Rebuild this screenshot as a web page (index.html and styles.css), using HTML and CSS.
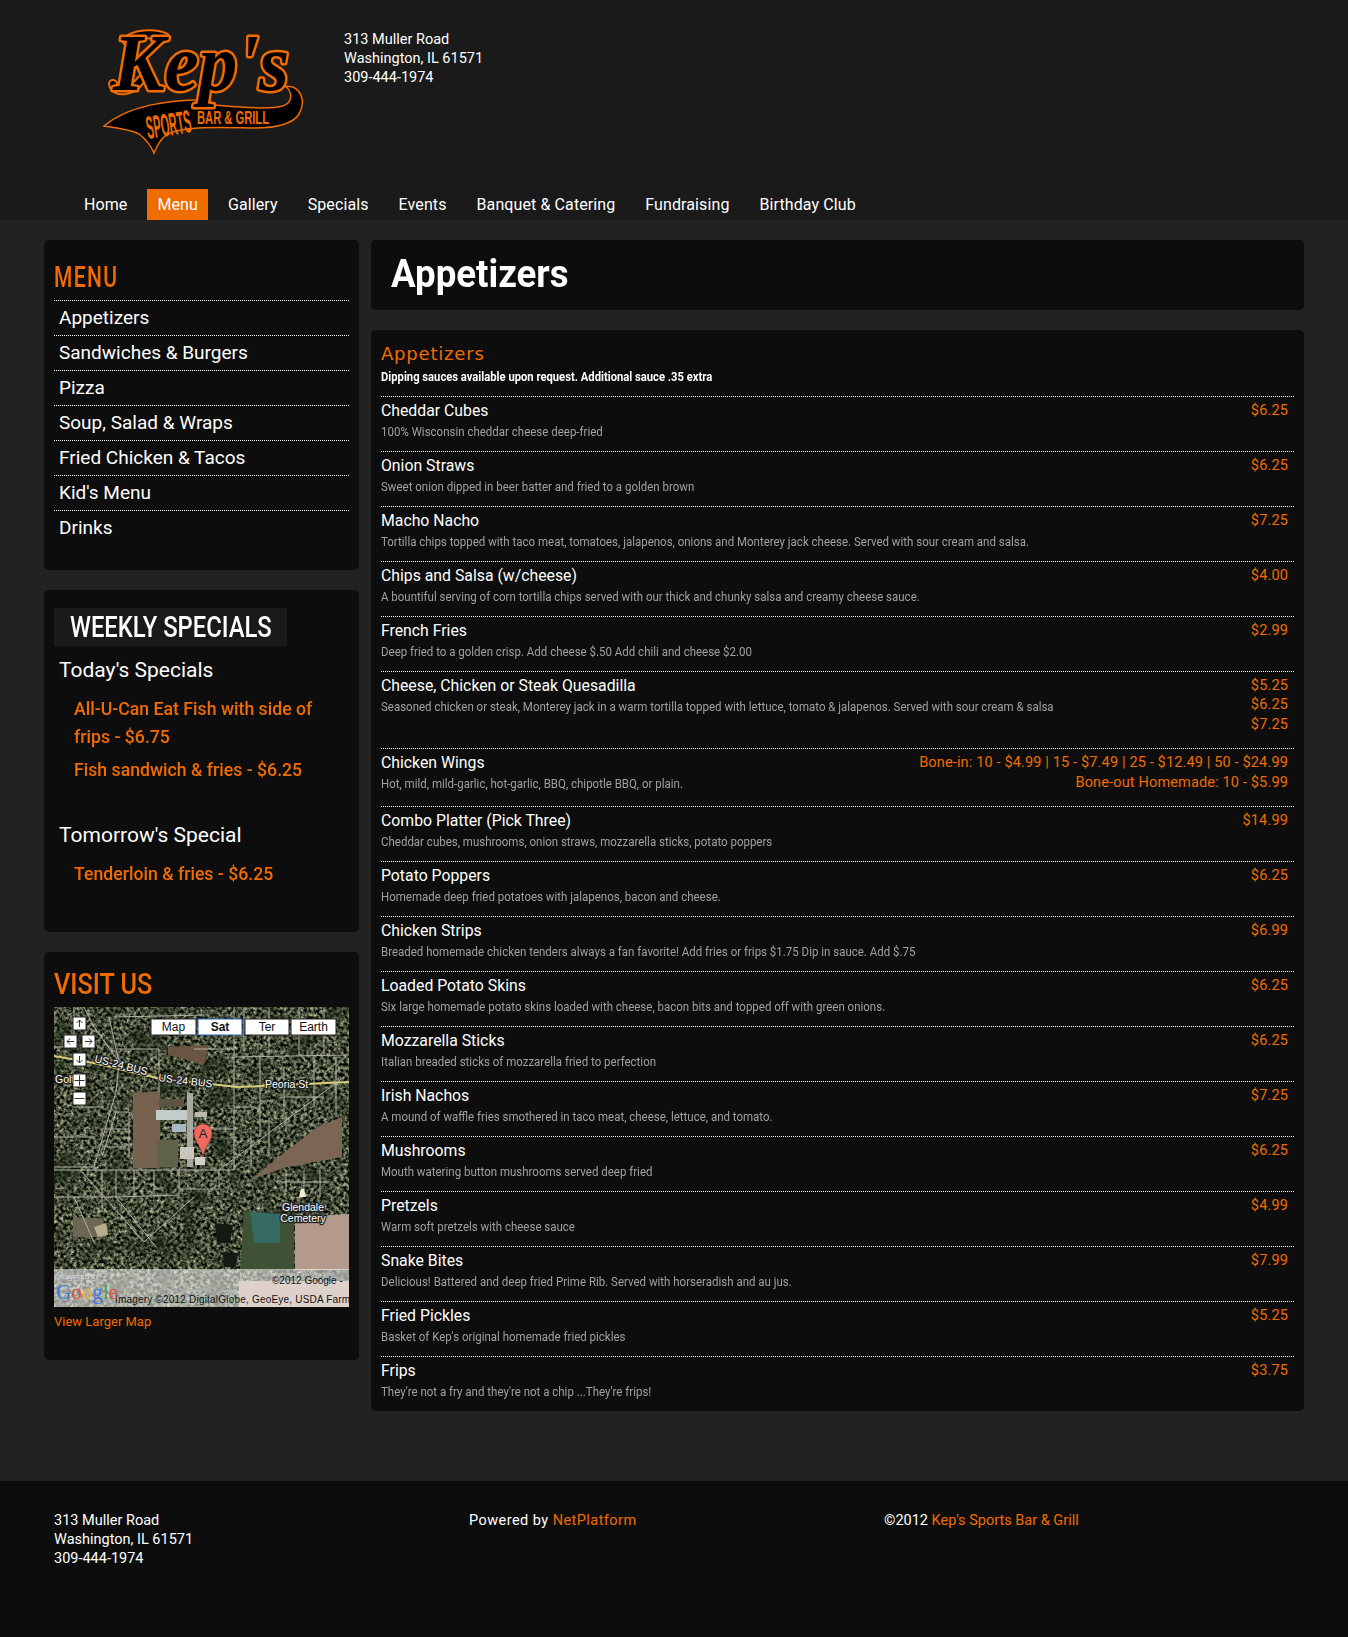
FILE: index.html
```html
<!DOCTYPE html>
<html lang="en">
<head>
    <meta charset="UTF-8">
    <meta name="viewport" content="width=device-width, initial-scale=1.0">
    <title>Kep's Sports Bar &amp; Grill - Menu</title>
    <link rel="stylesheet" href="styles.css">
</head>
<body>

<div class="header">
    <div class="header_top">
        <svg class="logo" width="204" height="128" viewBox="0 0 204 128">
            <!-- swoosh under the name -->
            <path class="swoosh" d="M1 96 C25 76 65 69 106 70 L110 75 C135 77 165 80 180 76 C190 72 190 62 182 56 L190 57 C200 62 202 74 196 84 C190 94 175 98 150 98 C110 97 75 96 62 106 C56 111 53 118 51 123 C48 116 44 110 36 104 C26 99 12 98 1 96 Z"/>
            <path class="flourish_out" d="M24 11 C30 4 50 2 62 7 M10 54 C12 63 28 63 38 50"/>
            <path class="flourish_in" d="M24 11 C30 4 50 2 62 7 M10 54 C12 63 28 63 38 50"/>
            <text class="logo_name" x="10" y="60" textLength="176" lengthAdjust="spacingAndGlyphs">Kep's</text>
            <text class="logo_sports" transform="translate(45 109) rotate(-9)" textLength="45" lengthAdjust="spacingAndGlyphs">SPORTS</text>
            <text class="logo_bar" x="94" y="94" textLength="72" lengthAdjust="spacingAndGlyphs">BAR &amp; GRILL</text>
        </svg>
        <div class="address">
            313 Muller Road<br>
            Washington, IL 61571<br>
            309-444-1974
        </div>
    </div>
    <div class="nav">
        <a href="#">Home</a>
        <a href="#" class="active">Menu</a>
        <a href="#">Gallery</a>
        <a href="#">Specials</a>
        <a href="#">Events</a>
        <a href="#">Banquet &amp; Catering</a>
        <a href="#">Fundraising</a>
        <a href="#">Birthday Club</a>
    </div>
</div>

<div class="main_div">
    <div class="sidebar">
        <div class="panel menu_panel">
            <h2 class="side_title menu_title"><span>MENU</span></h2>
            <ul class="side_menu">
                <li>Appetizers</li>
                <li>Sandwiches &amp; Burgers</li>
                <li>Pizza</li>
                <li>Soup, Salad &amp; Wraps</li>
                <li>Fried Chicken &amp; Tacos</li>
                <li>Kid's Menu</li>
                <li>Drinks</li>
            </ul>
        </div>

        <div class="panel specials_panel">
            <h2 class="specials_title"><span>WEEKLY SPECIALS</span></h2>
            <h3 class="specials_day">Today's Specials</h3>
            <p class="special">All-U-Can Eat Fish with side of frips - $6.75</p>
            <p class="special">Fish sandwich &amp; fries - $6.25</p>
            <h3 class="specials_day tomorrow">Tomorrow's Special</h3>
            <p class="special">Tenderloin &amp; fries - $6.25</p>
        </div>

        <div class="panel visit_panel">
            <h2 class="side_title visit_title"><span>VISIT US</span></h2>
            <svg class="map" width="295" height="300" viewBox="0 0 295 300">
                <defs>
                    <filter id="sat" x="0" y="0" width="100%" height="100%" color-interpolation-filters="sRGB">
                        <feTurbulence type="fractalNoise" baseFrequency="0.3" numOctaves="3" seed="7"/>
                        <feColorMatrix type="matrix" values="1.4 0 0 0 -0.43  1.4 0 0 0 -0.4  1.2 0 0 0 -0.38  0 0 0 0 1"/>
                    </filter>
                    <filter id="sat2" x="0" y="0" width="100%" height="100%" color-interpolation-filters="sRGB">
                        <feTurbulence type="fractalNoise" baseFrequency="0.04" numOctaves="2" seed="3"/>
                        <feColorMatrix type="matrix" values="0 0 0 0 0.08  0 0 0 0 0.12  0 0 0 0 0.06  2 0 0 0 -0.95"/>
                    </filter>
                </defs>
                <rect width="295" height="300" fill="#30362a"/>
                <rect width="295" height="300" filter="url(#sat)"/>
                <rect width="295" height="300" filter="url(#sat2)"/>

                <!-- fields -->
                <path d="M114 40 L155 38 L150 58 L130 52 L114 48 Z" fill="#6a5543"/>
                <path d="M79 86 L106 84 L106 161 L79 161 Z" fill="#77614f"/>
                <path d="M105 92 L130 92 L130 100 L105 100 Z" fill="#5d5442"/>
                <path d="M103 133 L124 133 L124 160 L103 160 Z" fill="#5f6148"/>
                <path d="M196 173 L263 120 L288 110 L288 150 L233 160 Z" fill="#7a6653"/>
                <path d="M241 210 L295 207 L295 263 L241 263 Z" fill="#b39a8a"/>
                <rect x="185" y="274" width="110" height="26" fill="#b39a8a"/>
                <path d="M190 204 L240 210 L240 263 L186 263 Z" fill="#3f5236"/>
                <path d="M196 205 L226 207 L226 236 L200 236 Z" fill="#356b62"/>
                <path d="M161 216 L179 218 L176 236 L163 236 Z" fill="#121a12"/>
                <path d="M169 245 L184 246 L182 260 L170 260 Z" fill="#121a12"/>
                <path d="M19 210 L49 212 L52 230 L19 230 Z" fill="#6c6654"/>
                <path d="M40 220 L52 216 L54 228 L44 230 Z" fill="#b4ad8e"/>

                <!-- buildings -->
                <rect x="102" y="103" width="31" height="10" fill="#c3cbcb"/>
                <rect x="118" y="117" width="14" height="8" fill="#a8b8c0"/>
                <rect x="133" y="86" width="6" height="74" fill="#a9a9a0"/>
                <rect x="126" y="140" width="14" height="12" fill="#c9c7bd"/>
                <rect x="141" y="105" width="12" height="5" fill="#bdb9aa"/>
                <rect x="141" y="150" width="10" height="8" fill="#d2d0c6"/>

                <!-- roads -->
                <g class="roads">
                    <path d="M0 163 L180 163 L180 0 M0 160 L40 160 L62 85 L65 55 L55 10 M62 42 L105 42 L105 85"/>
                    <path d="M180 50 L295 48 M206 48 L206 130 M260 48 L260 100 M165 163 L290 70 M140 122 L180 122 M180 100 L200 100"/>
                    <path d="M60 105 L75 105 L75 150 M52 122 L75 122 M48 140 L72 140 M62 105 L48 150"/>
                    <path d="M0 190 L62 190 L125 188 L125 163 M62 163 L62 190 L102 240 M28 165 L90 235 L140 190"/>
                    <path d="M125 182 L165 182 L165 163 M80 190 L80 163 M100 190 L100 163 M48 163 L48 205 M20 190 L40 235"/>
                    <path d="M0 40 L20 40 L20 0 M140 42 L180 42 M230 90 L270 90 M230 60 L230 110 M30 0 L40 20 L65 55 M60 10 L150 8"/>
                    <path d="M190 0 L190 45 M215 0 L215 48 M245 0 L245 48 M270 0 L270 48 M282 50 L282 110"/>
                    <path d="M197 160 L197 130 M215 110 L215 150 M232 105 L232 125 M20 100 L50 100 M0 130 L40 130"/>
                    <path d="M232 163 L232 185 M250 163 L250 190 M266 163 L266 190 M225 175 L275 175"/>
                </g>
                <path d="M0 49 L40 56 L103 71 L183 80 L295 75" class="highway"/>

                <!-- road labels -->
                <text class="map_label" transform="translate(40 55) rotate(14)">US-24 BUS</text>
                <text class="map_label" transform="translate(104 74) rotate(7)">US-24 BUS</text>
                <text class="map_label" x="211" y="81">Peoria St</text>
                <text class="map_label" x="1" y="76">Golf</text>
                <path d="M245 190 L247 182 L250 182 L252 190 Z" fill="#f3ecd0"/>
                <text class="map_label" x="249" y="204" text-anchor="middle">Glendale</text>
                <text class="map_label" x="249" y="215" text-anchor="middle">Cemetery</text>

                <!-- marker -->
                <path class="pin" d="M149 150 C148 140 140 134 140 126 A9 9 0 1 1 158 126 C158 134 150 140 149 150 Z"/>
                <text class="pin_letter" x="149" y="131" text-anchor="middle">A</text>

                <!-- controls -->
                <g class="map_ctrl">
                    <rect x="19" y="10" width="13" height="13"/>
                    <rect x="10" y="28" width="13" height="13"/>
                    <rect x="28" y="28" width="13" height="13"/>
                    <rect x="19" y="46" width="13" height="13"/>
                    <rect x="19" y="67" width="13" height="13"/>
                    <rect x="19" y="85" width="13" height="13"/>
                </g>
                <g class="map_arrow">
                    <path d="M25.500 20 V13 M22.500 16 L25.500 13 L28.500 16"/>
                    <path d="M20 34.500 H13 M16 31.500 L13 34.500 L16 37.500"/>
                    <path d="M31 34.500 H38 M35 31.500 L38 34.500 L35 37.500"/>
                    <path d="M25.500 49 V56 M22.500 53 L25.500 56 L28.500 53"/>
                    <path d="M20.500 73.500 H30.500 M25.500 68.500 V78.500"/>
                    <path d="M20.500 91.500 H30.500"/>
                </g>
                <g class="map_btn">
                    <rect x="97" y="12" width="45" height="16"/>
                    <rect class="map_btn_on" x="144" y="12" width="44" height="16"/>
                    <rect x="191" y="12" width="44" height="16"/>
                    <rect x="237" y="12" width="45" height="16"/>
                </g>
                <text class="map_btn_text" x="119.500" y="24" text-anchor="middle">Map</text>
                <text class="map_btn_text map_btn_bold" x="166" y="24" text-anchor="middle">Sat</text>
                <text class="map_btn_text" x="213" y="24" text-anchor="middle">Ter</text>
                <text class="map_btn_text" x="259.500" y="24" text-anchor="middle">Earth</text>

                <!-- bottom strip -->
                <rect y="262" width="295" height="38" fill="#fff" opacity=".55"/>
                <text class="map_powered" x="4" y="272">POWERED BY</text>
                <text class="map_google" y="292"><tspan x="2" fill="#3f78e0">G</tspan><tspan fill="#e0503f">o</tspan><tspan fill="#e8b93a">o</tspan><tspan fill="#3f78e0">g</tspan><tspan fill="#4aa04a">l</tspan><tspan fill="#e0503f">e</tspan></text>
                <text class="map_copy" x="218" y="277">©2012 Google -</text>
                <text class="map_copy map_copy_long" x="61" y="296">Imagery ©2012 DigitalGlobe, GeoEye, USDA Farm</text>
            </svg>
            <a href="#" class="map_link">View Larger Map</a>
        </div>
    </div>

    <div class="content">
        <div class="panel title_panel">
            <h1><span>Appetizers</span></h1>
        </div>

        <div class="panel list_panel">
            <h2 class="list_title">Appetizers</h2>
            <p class="list_note">Dipping sauces available upon request. Additional sauce .35 extra</p>

            <div class="item">
                <div><h4>Cheddar Cubes</h4><p>100% Wisconsin cheddar cheese deep-fried</p></div>
                <div class="price">$6.25</div>
            </div>
            <div class="item">
                <div><h4>Onion Straws</h4><p>Sweet onion dipped in beer batter and fried to a golden brown</p></div>
                <div class="price">$6.25</div>
            </div>
            <div class="item">
                <div><h4>Macho Nacho</h4><p>Tortilla chips topped with taco meat, tomatoes, jalapenos, onions and Monterey jack cheese. Served with sour cream and salsa.</p></div>
                <div class="price">$7.25</div>
            </div>
            <div class="item">
                <div><h4>Chips and Salsa (w/cheese)</h4><p>A bountiful serving of corn tortilla chips served with our thick and chunky salsa and creamy cheese sauce.</p></div>
                <div class="price">$4.00</div>
            </div>
            <div class="item">
                <div><h4>French Fries</h4><p>Deep fried to a golden crisp. Add cheese $.50 Add chili and cheese $2.00</p></div>
                <div class="price">$2.99</div>
            </div>
            <div class="item">
                <div><h4>Cheese, Chicken or Steak Quesadilla</h4><p>Seasoned chicken or steak, Monterey jack in a warm tortilla topped with lettuce, tomato &amp; jalapenos. Served with sour cream &amp; salsa</p></div>
                <div class="price">$5.25<br>$6.25<br>$7.25</div>
            </div>
            <div class="item">
                <div><h4>Chicken Wings</h4><p>Hot, mild, mild-garlic, hot-garlic, BBQ, chipotle BBQ, or plain.</p></div>
                <div class="price">Bone-in: 10 - $4.99 | 15 - $7.49 | 25 - $12.49 | 50 - $24.99<br>Bone-out Homemade: 10 - $5.99</div>
            </div>
            <div class="item">
                <div><h4>Combo Platter (Pick Three)</h4><p>Cheddar cubes, mushrooms, onion straws, mozzarella sticks, potato poppers</p></div>
                <div class="price">$14.99</div>
            </div>
            <div class="item">
                <div><h4>Potato Poppers</h4><p>Homemade deep fried potatoes with jalapenos, bacon and cheese.</p></div>
                <div class="price">$6.25</div>
            </div>
            <div class="item">
                <div><h4>Chicken Strips</h4><p>Breaded homemade chicken tenders always a fan favorite! Add fries or frips $1.75 Dip in sauce. Add $.75</p></div>
                <div class="price">$6.99</div>
            </div>
            <div class="item">
                <div><h4>Loaded Potato Skins</h4><p>Six large homemade potato skins loaded with cheese, bacon bits and topped off with green onions.</p></div>
                <div class="price">$6.25</div>
            </div>
            <div class="item">
                <div><h4>Mozzarella Sticks</h4><p>Italian breaded sticks of mozzarella fried to perfection</p></div>
                <div class="price">$6.25</div>
            </div>
            <div class="item">
                <div><h4>Irish Nachos</h4><p>A mound of waffle fries smothered in taco meat, cheese, lettuce, and tomato.</p></div>
                <div class="price">$7.25</div>
            </div>
            <div class="item">
                <div><h4>Mushrooms</h4><p>Mouth watering button mushrooms served deep fried</p></div>
                <div class="price">$6.25</div>
            </div>
            <div class="item">
                <div><h4>Pretzels</h4><p>Warm soft pretzels with cheese sauce</p></div>
                <div class="price">$4.99</div>
            </div>
            <div class="item">
                <div><h4>Snake Bites</h4><p>Delicious! Battered and deep fried Prime Rib. Served with horseradish and au jus.</p></div>
                <div class="price">$7.99</div>
            </div>
            <div class="item">
                <div><h4>Fried Pickles</h4><p>Basket of Kep's original homemade fried pickles</p></div>
                <div class="price">$5.25</div>
            </div>
            <div class="item">
                <div><h4>Frips</h4><p>They're not a fry and they're not a chip ...They're frips!</p></div>
                <div class="price">$3.75</div>
            </div>
        </div>
    </div>
</div>

<div class="footer">
    <div class="footer_col">
        313 Muller Road<br>
        Washington, IL 61571<br>
        309-444-1974
    </div>
    <div class="footer_col footer_powered">Powered by <a href="#">NetPlatform</a></div>
    <div class="footer_col">©2012 <a href="#">Kep's Sports Bar &amp; Grill</a></div>
</div>

</body>
</html>
```

FILE: styles.css
```css
body{
    margin: 0;
    background-color: #222222;
    color: #ffffff;
    font-family: Roboto, "Noto Sans", sans-serif;
}
a{
    color: #f06c00;
    text-decoration: none;
}
h1,h2,h3,h4,p,ul{
    margin: 0;
    padding: 0;
}

/* the headings use a narrow face, none is installed so squeeze them */
h1 span,
.side_title span,
.specials_title span{
    display: inline-block;
    transform-origin: left center;
}

/* header */
.header{
    background-color: #1a1a1a;
    height: 220px;
    display: flex;
    flex-direction: column;
    justify-content: space-between;
}
.header_top{
    display: flex;
    padding: 30px 0 0 103px;
}
.logo{
    flex: none;
    overflow: visible;
}
.swoosh{
    fill: #000000;
    stroke: #f06c00;
    stroke-width: 1.5;
}
.flourish_out{
    fill: none;
    stroke: #f06c00;
    stroke-width: 10;
    stroke-linecap: round;
}
.flourish_in{
    fill: none;
    stroke: #000000;
    stroke-width: 6;
    stroke-linecap: round;
}
.logo_name{
    font-family: "Liberation Serif", serif;
    font-style: italic;
    font-weight: bold;
    font-size: 80px;
    fill: #000000;
    stroke: #f06c00;
    stroke-width: 5px;
    paint-order: stroke;
    stroke-linejoin: round;
}
.logo_sports{
    font-family: "Liberation Sans", sans-serif;
    font-weight: bold;
    font-size: 32px;
    fill: #f06c00;
}
.logo_bar{
    font-family: "Liberation Sans", sans-serif;
    font-weight: bold;
    font-size: 19px;
    fill: #f06c00;
}
.address{
    margin: 0 0 0 37px;
    font-size: 14.500px;
    line-height: 19px;
}
.nav{
    display: flex;
    gap: 10px;
    padding-left: 74px;
}
.nav a{
    color: #ffffff;
    font-size: 16px;
    letter-spacing: .1px;
    line-height: 31px;
    padding: 0 10px;
}
.nav a.active{
    background-color: #f06c00;
}

/* columns */
.main_div{
    display: flex;
    gap: 12px;
    padding: 20px 44px 0;
    align-items: flex-start;
}
.sidebar{
    width: 315px;
    flex: none;
}
.content{
    width: 933px;
    flex: none;
}
.panel{
    background-color: #0d0d0d;
    border-radius: 5px;
    padding: 10px;
    box-sizing: border-box;
}

/* left panels */
.menu_panel{
    height: 330px;
    margin-bottom: 20px;
}
.side_title{
    color: #f06c00;
    font-size: 30px;
    line-height: 40px;
    font-weight: 500;
    margin-top: 7px;
    margin-bottom: 3px;
}
.menu_title span{
    letter-spacing: 2px;
    transform: scaleX(.7);
}
.side_menu{
    list-style: none;
}
.side_menu li{
    border-top: 1px dotted #ffffff;
    font-size: 19px;
    line-height: 34px;
    padding-left: 5px;
}
.specials_panel{
    height: 342px;
    margin-bottom: 20px;
    padding-top: 18px;
}
.specials_title{
    width: 233px;
    box-sizing: border-box;
    background-color: #1a1a1a;
    font-size: 29px;
    line-height: 38px;
    font-weight: 500;
    padding-left: 16px;
    white-space: nowrap;
}
.specials_title span{
    transform: scaleX(.82);
}
.specials_day{
    font-size: 21px;
    line-height: 28px;
    font-weight: normal;
    padding-left: 5px;
    margin-top: 10px;
}
.specials_day.tomorrow{
    margin-top: 43px;
}
.special{
    color: #f06c00;
    font-size: 19px;
    line-height: 28px;
    font-weight: 500;
    margin: 11px 0 -6px 20px;
    transform: scaleX(.93);
    transform-origin: left center;
}
.visit_panel{
    height: 408px;
}
.visit_title{
    margin-top: 2px;
    margin-bottom: 3px;
}
.visit_title span{
    transform: scaleX(.84);
}
.map{
    display: block;
}
.map_link{
    display: block;
    font-size: 13px;
    line-height: 16px;
    margin-top: 7px;
}

/* map drawing */
.roads path{
    fill: none;
    stroke: #b0b0a5;
    stroke-width: 1;
}
.highway{
    fill: none;
    stroke: #d8cf7e;
    stroke-width: 2;
}
.map_label{
    font-family: "Liberation Sans", sans-serif;
    font-size: 10.500px;
    fill: #ffffff;
    stroke: #222222;
    stroke-width: 2.500px;
    paint-order: stroke;
}
.pin{
    fill: #ee6a60;
    stroke: #a8352e;
    stroke-width: .6;
}
.pin_letter{
    font-family: "Liberation Sans", sans-serif;
    font-size: 13px;
    fill: #222222;
}
.map_ctrl rect{
    fill: #ffffff;
    stroke: #222222;
    stroke-width: 1;
}
.map_arrow path{
    fill: none;
    stroke: #333333;
    stroke-width: 1;
}
.map_btn rect{
    fill: #ffffff;
    stroke: #222222;
    stroke-width: 1;
}
.map_btn .map_btn_on{
    stroke: #2b5fb0;
}
.map_btn_text{
    font-family: "Liberation Sans", sans-serif;
    font-size: 12px;
    fill: #111111;
}
.map_btn_bold{
    font-weight: bold;
}
.map_powered{
    font-family: "Liberation Sans", sans-serif;
    font-size: 6px;
    font-weight: bold;
    fill: #d0d0d0;
}
.map_google{
    font-family: "Liberation Serif", serif;
    font-size: 21px;
}
.map_copy{
    font-family: "Liberation Sans", sans-serif;
    font-size: 10px;
    fill: #111111;
}
.map_copy_long{
    letter-spacing: .2px;
}

/* right column */
.title_panel{
    height: 70px;
    margin-bottom: 20px;
    padding: 10px 20px;
}
h1{
    font-size: 39px;
    line-height: 48px;
    font-weight: bold;
}
h1 span{
    transform: scaleX(.94);
}
.list_panel{
    padding-bottom: 0;
}
.list_title{
    color: #f06c00;
    font-family: "DejaVu Sans", sans-serif;
    font-size: 18px;
    line-height: 26px;
    font-weight: normal;
    letter-spacing: .8px;
    margin-top: 1px;
}
.list_note{
    font-size: 13px;
    font-weight: bold;
    line-height: 20px;
    margin-bottom: 9px;
    transform: scaleX(.863);
    transform-origin: left center;
}
.item{
    display: flex;
    justify-content: space-between;
    border-top: 1px dotted #ffffff;
    padding: 4px 6px 14px 0;
}
.item h4{
    font-size: 15.800px;
    line-height: 19px;
    font-weight: normal;
}
.item p{
    color: #a0a0a0;
    font-size: 13px;
    line-height: 17px;
    margin-top: 3px;
    margin-bottom: -3px;
    transform: scaleX(.884);
    transform-origin: left center;
}
.price{
    color: #f06c00;
    font-size: 14.500px;
    letter-spacing: .15px;
    line-height: 19.400px;
    text-align: right;
}

/* footer */
.footer{
    background-color: #0d0d0d;
    margin-top: 70px;
    height: 156px;
    box-sizing: border-box;
    padding: 30px 0 0 54px;
    display: flex;
    font-size: 14.500px;
    line-height: 19px;
}
.footer_col{
    width: 415px;
    flex: none;
}
.footer_powered{
    letter-spacing: .45px;
}
```
